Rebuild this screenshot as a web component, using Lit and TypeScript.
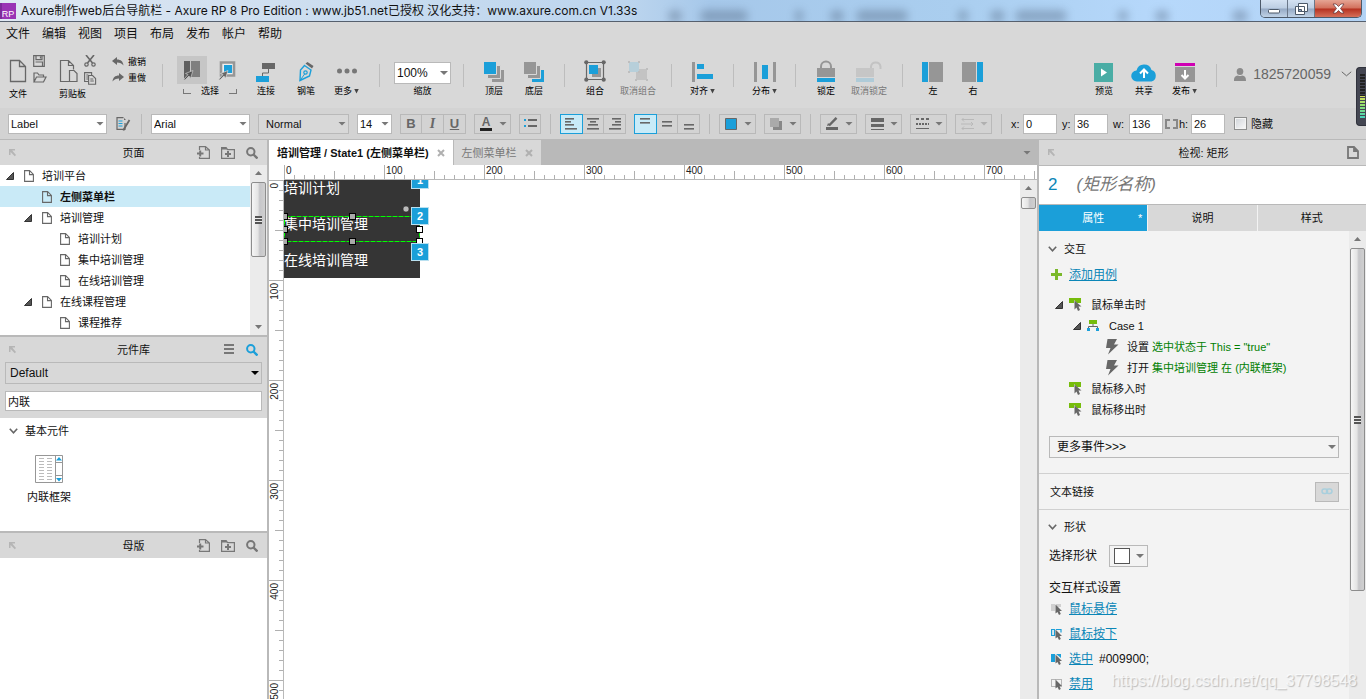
import { LitElement, html, svg, css, nothing } from "lit";
import { customElement, state } from "lit/decorators.js";
import { classMap } from "lit/directives/class-map.js";

const G = "#676767";
const M = "#969696";
const B = "#1b9fd9";

const icon = (w: number, h: number, body: unknown) =>
  html`<svg width=${w} height=${h} viewBox="0 0 ${w} ${h}" aria-hidden="true">${body}</svg>`;

const ic = {
  file: () => icon(18, 24, svg`<path d="M1.500 1.500h9l6 6v15h-15z M10.500 1.500v6h6" fill="none" stroke=${G} stroke-width="1.300"/>`),
  save: () => icon(12, 12, svg`<path d="M.7.7h10.600v10.600H.7z M3 .7v4h6v-4 M7.500 1.500v2 M2.500 7h7v4" fill="none" stroke=${G} stroke-width="1.200"/>`),
  open: () => icon(14, 11, svg`<path d="M1 10V1h3.500l1.500 2h4.500v2 M1 10l2.500-5h9.500l-2.500 5z" fill="none" stroke=${G} stroke-width="1.200"/>`),
  paste: () => icon(19, 24, svg`<path d="M10 22.500H1.500v-21h8l5 5v4 M9.500 1.500v5h5 M10.500 11.500h4.500l3 3v8h-7.500z" fill="none" stroke=${G} stroke-width="1.200"/>`),
  cut: () => icon(12, 12, svg`<path d="M2 0l6.500 8 M10 0L3.500 8" stroke=${G} stroke-width="1.600"/><g fill="none" stroke=${G} stroke-width="1.200"><circle cx="2.500" cy="9.500" r="1.700"/><circle cx="9.500" cy="9.500" r="1.700"/></g>`),
  copy: () => icon(13, 13, svg`<path d="M4 9.500H.6V.6h7V3 M2.300 3h2 M2.300 5h2 M2.300 7h2 M4.600 3.500h4l3 3v5.800h-7z M6.300 7h3 M6.300 9h3.500" fill="none" stroke=${G} stroke-width="1.100"/>`),
  undo: () => icon(12, 11, svg`<path d="M0 4l5-4v2.500c4 0 6 2 6.500 6C10 6.500 8 5.500 5 5.500V8z" fill=${G}/>`),
  redo: () => icon(12, 11, svg`<path d="M12 4L7 0v2.500C3 2.500 1 4.500.5 8.500 2 6.500 4 5.500 7 5.500V8z" fill=${G}/>`),
  selectIntersect: () => icon(18, 20, svg`<path d="M1 1h6v12l-5 5H1z" fill="#5f5f5f"/><path d="M8 1h9v16H8z" fill="#7f7f7f"/><path d="M.5 19.500l4.500-5-2.500-1 7.500-3-2.500 8-1.500-2.500-4 4z" fill="#555" stroke="#ccc" stroke-width=".7"/>`),
  selectContain: () => icon(18, 20, svg`<path d="M3 2.500h13v13H3z" fill="#eee" stroke=${M} stroke-width="2.600"/><path d="M6 5h8v8H6z" fill=${B}/><path d="M.5 19.500l4.500-5-2.500-1 7.500-3-2.500 8-1.500-2.500-4 4z" fill=${G} stroke="#ddd" stroke-width=".7"/>`),
  connect: () => icon(20, 20, svg`<path d="M6 1h13v6H6z" fill=${G}/><path d="M0 14h13v6H0z" fill=${B}/><path d="M12.500 7v4h-6v3" fill="none" stroke=${G}/>`),
  pen: () => icon(16, 20, svg`<path d="M7.500 1.500l2-1.500 6 4-1.500 2.500z" fill=${G}/><path d="M6.500 3.500l6.500 4.500-1.500 6-9.500 4.500L2.500 8z" fill="none" stroke=${B} stroke-width="1.400"/><path d="M2 18.500L7 11.500" stroke=${B}/><circle cx="7.500" cy="10.500" r="1.700" fill="#d8d8d8" stroke=${B} stroke-width="1.200"/>`),
  more: () => icon(20, 20, svg`<g fill="#777"><circle cx="2.500" cy="9" r="2.500"/><circle cx="10" cy="9" r="2.500"/><circle cx="17.500" cy="9" r="2.500"/></g>`),
  front: () => icon(20, 20, svg`<path d="M8 8h12v12H8z" fill=${M}/><path d="M3.500 3.500h13v13h-13z" fill=${M} stroke="#d8d8d8"/><path d="M-.5-.5h13v13h-13z" fill=${B} stroke="#d8d8d8"/>`),
  back: () => icon(20, 20, svg`<path d="M8 8h12v12H8z" fill=${B}/><path d="M3.500 3.500h13v13h-13z" fill=${M} stroke="#d8d8d8"/><path d="M-.5-.5h13v13h-13z" fill=${M} stroke="#d8d8d8"/>`),
  group: () => icon(22, 22, svg`<path d="M2.500 2.500h17v17h-17z" fill="none" stroke=${G} stroke-width="1.200"/><path d="M8 8h9v9H8z" fill=${M}/><path d="M5 5h9v9H5z" fill=${B}/><g fill=${G}><circle cx="2.300" cy="2.300" r="2.100"/><circle cx="19.700" cy="2.300" r="2.100"/><circle cx="2.300" cy="19.700" r="2.100"/><circle cx="19.700" cy="19.700" r="2.100"/></g>`),
  ungroup: () => icon(22, 22, svg`<path d="M9 9h11v11H9z" fill="#c3c3c3"/><path d="M2 2h10v10H2z" fill="#b7cfda"/><path d="M1 1h2v2H1z M11 1h2v2h-2z M1 11h2v2H1z M11 11h2v2h-2z M19 8h2v2h-2z M8 19h2v2H8z M19 19h2v2h-2z" fill="#bebebe"/>`),
  align: () => icon(22, 20, svg`<path d="M0 0h3v20H0z" fill=${M}/><path d="M5 2h7v5H5z M5 12h16v5H5z" fill=${B}/>`),
  distribute: () => icon(22, 20, svg`<path d="M0 0h3v20H0z M19 0h3v20h-3z" fill=${M}/><path d="M8 3h6v14H8z" fill=${B}/>`),
  lock: () => icon(18, 22, svg`<path d="M4 9V6.500a5 5 0 0 1 10 0V9" fill="none" stroke=${M} stroke-width="2"/><path d="M0 8h18v9H0z" fill=${M}/><path d="M0 18h18v4H0z" fill=${B}/>`),
  unlock: () => icon(26, 22, svg`<path d="M15 9V6.500a4.800 4.800 0 0 1 9.500 0V9" fill="none" stroke="#c3c3c3" stroke-width="2"/><path d="M0 8h18v9H0z" fill="#c6c6c6"/><path d="M0 18h18v4H0z" fill="#afcbd8"/>`),
  left: () => icon(22, 20, svg`<path d="M0 0h6v20H0z" fill=${B}/><path d="M7 0h14v20H7z" fill=${M}/>`),
  right: () => icon(22, 20, svg`<path d="M0 0h14v20H0z" fill=${M}/><path d="M15 0h6v20h-6z" fill=${B}/>`),
  preview: () => icon(20, 20, svg`<path d="M0 1h19v19H0z" fill="#4aada5"/><path d="M7 6.500l6 4-6 4z" fill="#fff"/>`),
  share: () => icon(26, 20, svg`<path d="M6 19.500a5.500 5.500 0 0 1-.5-11A7.800 7.800 0 0 1 20.500 8a6 6 0 0 1 0 11.500z" fill=${B}/><path d="M13 16V8 M9 11.500l4-4 4 4" fill="none" stroke="#fff" stroke-width="2"/>`),
  publish: () => icon(20, 20, svg`<path d="M0 1h20v3H0z" fill="#cf00b3"/><path d="M0 5h20v15H0z" fill=${M}/><path d="M10 8v8 M6.500 13l3.500 3.500 3.500-3.500" fill="none" stroke="#fff" stroke-width="2"/>`),
  user: () => icon(12, 13, svg`<ellipse cx="6" cy="3.500" rx="3.300" ry="3.500" fill="#8b8b8b"/><path d="M0 13c0-4 1-5 4-5.500q2 1 4 0c3 .5 4 1.500 4 5.500z" fill="#8b8b8b"/>`),
  chevron: (w = 9) => icon(w, 6, svg`<path d="M.8.8l${w / 2 - .8} 4 ${w / 2 - .8}-4" fill="none" stroke="#666" stroke-width=${w > 9 ? 1 : 1.6}/>`),
  styleEdit: () => icon(15, 14, svg`<path d="M7.500.6H1v11.800h8V6" fill="none" stroke=${G} stroke-width="1.200"/><path d="M2.500 4h4 M2.500 6.500h4 M2.500 9h4" stroke=${B}/><path d="M13.500 3L8 12l-.5 1.500" stroke=${G} stroke-width="1.800"/><path d="M8 1l2 2H8z" fill=${G}/>`),
  list: () => icon(13, 12, svg`<path d="M0 1h2v2H0z M0 7h2v2H0z" fill=${B}/><path d="M4 1h9v2H4z M4 7h9v2H4z" fill=${G}/>`),
  txt: (rows: number[][]) => icon(12, 12, svg`${rows.map(([x, y, w]) => svg`<rect x=${x} y=${y} width=${w} height="1.600" fill=${G}/>`)}`),
  fill: () => icon(12, 12, svg`<path d="M.5.5h11v11H.5z" fill=${B} stroke=${G}/>`),
  shadow: () => icon(12, 12, svg`<path d="M3 3h9v9H3z" fill="#888"/><path d="M0 0h9v9H0z" fill="#aaa"/>`),
  pencil: () => icon(13, 13, svg`<path d="M0 10h12v3H0z" fill=${G}/><path d="M3 8.500L10.500.8" stroke=${G} stroke-width="2.400"/><path d="M1 9l1-3 2 2z" fill=${G}/>`),
  weight: () => icon(13, 12, svg`<path d="M0 0h13v4H0z M0 6h13v3H0z M0 11h13v1H0z" fill=${G}/>`),
  dash: () => icon(13, 12, svg`<path d="M0 1h13" stroke=${G} stroke-width="2" stroke-dasharray="3 2"/><path d="M0 6h13" stroke=${G} stroke-width="2" stroke-dasharray="2 1"/><path d="M0 10.500h13" stroke=${G}/>`),
  arrows: () => icon(13, 12, svg`<path d="M1 1.500h12 M3-.5L1 1.500l2 2 M0 6h12 M10 4l2 2-2 2 M1 10.500h12 M3 8.500l-2 2 2 2" fill="none" stroke="#b9b9b9"/>`),
  ratio: () => icon(13, 10, svg`<path d="M5 1H1v8h4 M8 1h4v8H8" fill="none" stroke="#888" stroke-width="2"/>`),
  collapse: () => icon(7, 8, svg`<path d="M0 0h6v1.500H3.200L7 6l-1.200 1.200L1.500 3v3H0z" fill="#b5b5b5"/>`),
  doc: () => icon(10, 12, svg`<path d="M.6.6h5l3.800 3.800v7H.6z M5.500.6v4h4" fill="none" stroke=${G} stroke-width="1.100"/>`),
  docBold: () => icon(12, 13, svg`<path d="M1 1h6l4 4v7H1z M7 1v4h4" fill="none" stroke="#777" stroke-width="1.800"/>`),
  addPage: () => icon(13, 13, svg`<path d="M2.500 4V.6h6L12.400 4v8.400H2.500V11 M8.500.6V4h4" fill="none" stroke="#777" stroke-width="1.200"/><path d="M0 7.500h6.500 M3.200 4.500v6" stroke="#777" stroke-width="2"/>`),
  addFolder: () => icon(14, 12, svg`<path d="M.6 11.400V.6h4.500l1.500 2h6.800v8.800z" fill="none" stroke="#777" stroke-width="1.200"/><path d="M.6.6h4.500l1 2H.6z" fill="#777"/><path d="M4 7h6 M7 4v6" stroke="#777" stroke-width="2"/>`),
  search: (c: string) => icon(12, 12, svg`<circle cx="4.800" cy="4.800" r="3.700" fill="none" stroke=${c} stroke-width="2"/><path d="M7.500 7.500l4 4" stroke=${c} stroke-width="2.400"/>`),
  menu: () => icon(12, 11, svg`<path d="M1 0h10v2H1z M1 4h10v2H1z M1 8h10v2H1z" fill="#777"/>`),
  toggle: () => icon(8, 8, svg`<path d="M7.500.5v7h-7z" fill="#555" stroke="#333"/>`),
  frame: () => icon(28, 28, svg`<path d="M.5.5h27v27H.5z M20.500.5v27 M20.500 7.500h7 M20.500 20.500h7" fill="#fff" stroke=${M}/><path d="M4 3.500h5 M12 3.500h5 M4 6.500h5 M12 6.500h5 M4 9.500h5 M12 9.500h5 M4 12.500h5 M12 12.500h5 M4 15.500h5 M12 15.500h5 M4 18.500h5 M12 18.500h5 M4 21.500h5 M12 21.500h5 M4 24.500h5 M12 24.500h5" stroke="#bbb"/><path d="M21 5.500l3-3.500 3 3.500z M21 23l3 3.500 3-3.500z" fill=${B}/>`),
  event: () => icon(16, 14, svg`<path d="M0 0h12v5H8L5 2v3H0z" fill="#76bc0c"/><path d="M5.500 2.500v9l2-2 1.500 3.500 2-1-1.500-3.500h3z" fill=${G}/>`),
  caseIcon: () => icon(16, 14, svg`<path d="M2 1h8v4H2z" fill="#76bc0c"/><path d="M6 5v2.500 M1.500 9V7.500h9V9" fill="none" stroke=${G}/><path d="M0 9h3v3H0z M9 9h3v3H9z" fill=${B}/>`),
  bolt: () => icon(16, 16, svg`<path d="M2.500 0H12L9 5.500h4.500L3 15.500l2.500-6.500H1z" fill=${G}/>`),
  plus: () => icon(12, 12, svg`<path d="M4 0h3v4h4v3H7v4H4V7H0V4h4z" fill="#7ab82a"/>`),
  link: () => icon(12, 7, svg`<g fill="none" stroke="#a9cfdd" stroke-width="1.500"><rect x="1" y="1" width="5.500" height="4.500" rx="2.200"/><rect x="5.500" y="1" width="5.500" height="4.500" rx="2.200"/></g>`),
  state: (kind: string) => icon(12, 12, svg`
    ${kind === "hover" ? svg`<path d="M0 1h4v7H0z M5 1h5v3H5z" fill="#d0d0d0"/>` : nothing}
    ${kind === "down" ? svg`<path d="M3.500 1.500H.6v6h2.900z M5 1.500h5v3" fill="none" stroke=${B} stroke-width="1.200"/>` : nothing}
    ${kind === "sel" ? svg`<path d="M0 1h4v8H0z M5 1h5v4z" fill=${B}/>` : nothing}
    ${kind === "off" ? svg`<path d="M.5 1.500h10v7H.5z" fill="none" stroke="#777" stroke-dasharray="1 1"/>` : nothing}
    <path d="M4.500 1.500v9l2-1.500 1.500 3 1.800-1-1.300-3H11z" fill=${G}/>`),
};

interface PageNode { text: string; depth: number; open?: boolean; selected?: boolean }

const PAGES: PageNode[] = [
  { text: "培训平台", depth: 0, open: true },
  { text: "左侧菜单栏", depth: 1, selected: true },
  { text: "培训管理", depth: 1, open: true },
  { text: "培训计划", depth: 2 },
  { text: "集中培训管理", depth: 2 },
  { text: "在线培训管理", depth: 2 },
  { text: "在线课程管理", depth: 1, open: true },
  { text: "课程推荐", depth: 2 },
];

@customElement("app-root")
export class AppRoot extends LitElement {
  static styles = css`
    :host { display: flex; flex-direction: column; height: 100vh; overflow: hidden; position: relative; background: #d8d8d8; color: #111;
      font: 11px/16px "Liberation Sans", "Noto Sans CJK SC", sans-serif; }
    * { box-sizing: border-box; }
    svg { display: block; flex: none; }
    button { font: inherit; color: inherit; border: 0; padding: 0; margin: 0; background: none; }
    input, select { font: inherit; color: #111; margin: 0; border: 1px solid #b9b9b9; border-radius: 0; background: #fff; min-width: 0; }
    input { padding: 0 2px; }
    select { appearance: none; padding: 0 14px 0 2px; width: 100%; height: 100%; }
    a { color: #0b86b7; text-decoration: underline; }
    .caret { width: 8px; height: 4px; background: #777; clip-path: polygon(0 0, 100% 0, 50% 100%); flex: none; }
    .sel { display: grid; flex: none; height: 20px; align-items: center; }
    .sel > * { grid-area: 1 / 1; }
    .sel > .caret { justify-self: end; margin-right: 3px; pointer-events: none; }

    .titlebar { height: 22px; flex: none; display: flex; align-items: center; position: relative; border-bottom: 1px solid #56606e; overflow: hidden;
      font: 12px/20px "Inter", "Noto Sans CJK SC", sans-serif;
      background: linear-gradient(90deg, #dfe8f3 0, #cfdff0 20%, #bcd5ee 46%, #a6c8ea 52%, #aaceef 70%, #b6d8fb 85%, #b3d3f5 100%); }
    .blobs { position: absolute; inset: 0; }
    .blob { position: absolute; top: 10px; height: 12px; background: #42536b; filter: blur(4px); opacity: .35; border-radius: 6px; }
    .logo { width: 16px; height: 16px; display: flex; align-items: flex-end; justify-content: center; background: linear-gradient(90deg, #7d2a9a 2px, #9a34b5 2px); color: #fff; font: 9px/10px "Liberation Sans", sans-serif; position: relative; }
    .title { margin: 0 0 0 5px; font-size: 12px; font-weight: 400; position: relative; white-space: nowrap; }
    .winbtns { position: relative; margin-left: auto; margin-right: 4px; align-self: flex-start; display: flex; height: 18px; border: 1px solid #4c5969; border-top: 0; border-radius: 0 0 5px 5px; overflow: hidden; }
    .winbtns button { width: 27px; display: grid; place-items: center; border-right: 1px solid #6a7789; background: linear-gradient(#d4e2f2 0, #bccde2 48%, #95a9c4 52%, #c0d2e6 100%); }
    .winbtns .close { width: 46px; border: 0; background: linear-gradient(#e5a594 0, #d2705c 48%, #b53120 52%, #d6705a 100%); }

    .menubar { height: 24px; flex: none; display: flex; gap: 12px; padding: 0 6px; align-items: center; font-size: 12px; }
    .toolbar { height: 62px; flex: none; display: flex; font-size: 9px; line-height: 12px; padding: 8px 14px 0 9px; color: #000; }
    .duo { display: grid; grid-template-columns: auto auto; column-gap: 6px; align-content: start; }
    .duo .big { grid-row: 1 / 3; padding-top: 5px; height: 33px; display: flex; align-items: flex-start; }
    .duo .small { height: 17px; padding-top: 1px; display: flex; align-items: flex-start; }
    .duo .lbl { grid-column: 1 / 3; text-align: left; }
    .clip { margin-left: 12px; }
    .undo { margin-left: 15px; display: flex; flex-direction: column; }
    .undo button { display: flex; align-items: center; gap: 4px; height: 16px; }
    .sep { width: 1px; height: 23px; margin: 10px 10px 0; background: #bdbdbd; flex: none; }
    .sep.wide { margin: 10px 12px 0; }
    .sep.first { margin: 10px 14px 0 16px; }
    .tool { width: 40px; display: flex; flex-direction: column; align-items: center; flex: none; }
    .tool .pic { height: 31px; padding-bottom: 3px; display: flex; align-items: flex-end; }
    .tool .cap { display: flex; align-items: center; gap: 2px; white-space: nowrap; }
    .tool.drop { width: 41px; }
    .tool.long { width: 46px; }
    .tool.off { color: #777; }
    .mini { width: 5px; height: 5px; background: #444; clip-path: polygon(0 0, 100% 0, 50% 100%); }
    .picks { display: flex; flex-direction: column; margin-right: 7px; width: 62px; }
    .picks .pair { display: flex; gap: 10px; padding-top: 2px; height: 31px; }
    .picks .pair button { height: 28px; display: grid; place-items: center; width: 20px; }
    .picks .pair .on { width: 30px; background: #c6c6c6; }
    .picks .cap { display: flex; justify-content: space-between; align-items: center; padding: 0 2px 0 6px; }
    .corner { width: 8px; height: 5px; border: solid #777; border-width: 0 0 1px 1px; }
    .corner.r { border-width: 0 1px 1px 0; }
    .zoom { width: 61px; padding: 8px 2px 0; display: flex; flex-direction: column; align-items: center; }
    .zoom .sel { height: 22px; width: 57px; font-size: 12px; margin-bottom: 1px; }
    .right { margin-left: auto; display: flex; }
    .user { display: flex; align-items: center; gap: 7px; height: 40px; font-size: 14px; color: #666; }
    .user svg:last-child { margin-left: 3px; }
    .sep.account { margin: 10px 17px 0 11px; }

    .format { height: 32px; flex: none; display: flex; align-items: center; gap: 8px; padding: 0 8px; background: #d3d3d3; border-bottom: 1px solid #b9b9b9; }
    .format .bar { width: 1px; height: 20px; margin: 0 1px; background: #b9b9b9; flex: none; }
    .w99 { width: 99px; } .w91 { width: 91px; } .w35 { width: 35px; }
    .w91 select { background: #d8d8d8; padding-left: 7px; }
    .sty { width: 17px; display: grid; place-items: center; }
    .seg { display: flex; border: 1px solid #b9b9b9; height: 20px; flex: none; }
    .seg button { width: 22px; display: grid; place-items: center; border-right: 1px solid #b9b9b9; color: #676767; font-size: 13px; font-weight: 700; line-height: 14px; }
    .seg button:first-child, .seg button:last-child { width: 21px; }
    .seg button:last-child { border-right: 0; }
    .seg .on { background: #c8ebf8; outline: 1px solid #1b9fd9; border-color: #c8ebf8; }
    .seg .i { font-style: italic; font-family: "Liberation Serif", serif; font-size: 14px; }
    .seg .u { text-decoration: underline; }
    .one { width: 22px; height: 20px; border: 1px solid #b9b9b9; display: grid; place-items: center; flex: none; }
    .dd { width: 37px; height: 20px; border: 1px solid #b9b9b9; display: flex; align-items: center; justify-content: space-between; padding: 0 3px 0 5px; flex: none; }
    .dd.off .caret { background: #b0b0b0; }
    .glyph { width: 12px; font-size: 12px; line-height: 12px; font-weight: 700; color: #676767; border-bottom: 3px solid #222; text-align: center; }
    .geo { display: flex; align-items: center; color: #111; }
    .geo label { display: flex; align-items: center; margin-right: 5px; }
    .geo label span { width: 12px; }
    .geo label .wide { width: 16px; }
    .geo input { width: 34px; height: 20px; }
    .geo .nogap { margin-right: 2px; }
    .geo .tight { margin: 0; padding-left: 1px; }
    .hide { display: flex; align-items: center; gap: 4px; padding-left: 1px; }
    .hide input { appearance: none; width: 13px; height: 13px; border: 1px solid #8e8f8f; background: linear-gradient(135deg, #cfd3d8, #fbfbfb); outline: 1px solid #f4f4f4; outline-offset: -2px; }

    .main { flex: 1; min-height: 0; display: grid; grid-template-columns: 267px minmax(0, 1fr) 327px; gap: 2px; background: #b9b9b9; }
    .left { display: flex; flex-direction: column; min-height: 0; gap: 2px; }
    .panel { background: #fff; display: flex; flex-direction: column; min-height: 0; overflow: hidden; }
    .panel.grow { flex: 1; }
    .head { height: 25px; flex: none; display: grid; grid-template-columns: 1fr auto 1fr; align-items: center; padding: 0 9px; background: #d8d8d8; }
    .head h2 { margin: 0; font-size: 11px; font-weight: 400; }
    .head .acts { display: flex; justify-content: flex-end; align-items: center; gap: 11px; }
    .scrollable { display: flex; min-height: 0; flex: 1; }
    .tree { flex: 1; margin: 0; padding: 0 0 2px; list-style: none; min-width: 0; }
    .node { height: 21px; display: flex; align-items: center; gap: 8px; padding-left: 6px; }
    .node .tg { width: 10px; }
    .node.d1 { padding-left: 24px; }
    .node.d2 { padding-left: 42px; }
    .node.selected { background: #c9eaf7; font-weight: 700; }
    .sb { width: 17px; flex: none; background: #ebebeb; display: flex; flex-direction: column; align-items: center; padding: 6px 1px; }
    .sb .up { width: 7px; height: 4px; background: #777; clip-path: polygon(50% 0, 100% 100%, 0 100%); margin-bottom: 7px; flex: none; }
    .sb .down { width: 7px; height: 4px; background: #777; clip-path: polygon(0 0, 100% 0, 50% 100%); margin-top: auto; }
    .thumb { width: 15px; border: 1px solid #8d8d8d; border-radius: 2px; background: linear-gradient(90deg, #f6f6f6, #e4e4e4 45%, #c6c6c9 60%, #d0d0d0); display: grid; place-items: center; flex: none; }
    .grip { width: 7px; height: 8px; background: repeating-linear-gradient(#555 0 2px, #eee 2px 3px); }
    .t75 { height: 75px; } .t12 { height: 12px; } .t343 { height: 343px; }

    .lib { background: #d8d8d8; padding: 0 5px 7px; display: flex; flex-direction: column; gap: 7px; }
    .lib .sel { height: 22px; font-size: 12px; }
    .lib select { background: #d8d8d8; padding-left: 4px; }
    .lib .caret { background: #000; }
    .lib input { height: 20px; width: 100%; }
    .group { display: flex; align-items: center; gap: 7px; height: 26px; padding-left: 9px; margin: 0; font-size: 11px; font-weight: 400; }
    .widgets { display: flex; height: 87px; padding: 11px 16px 0; }
    .widget { width: 66px; display: flex; flex-direction: column; align-items: center; gap: 6px; align-self: flex-start; }

    .center { display: flex; flex-direction: column; min-width: 0; background: #fff; }
    .tabs { height: 25px; flex: none; display: flex; background: #b9b9b9; align-items: center; }
    .tab { height: 25px; padding: 0 8px; display: flex; align-items: center; gap: 8px; background: #d8d8d8; color: #777; border-right: 1px solid #b9b9b9; white-space: nowrap; }
    .tab.on { background: #fff; color: #111; font-weight: 700; }
    .tabs .caret { margin-left: auto; margin-right: 6px; }
    .board { flex: 1; min-height: 0; display: grid; grid-template-columns: 15px minmax(0, 1fr); grid-template-rows: 15px minmax(0, 1fr); }
    .rh { grid-column: 2; display: block; border-bottom: 1px solid #b9b9b9; overflow: hidden; }
    .rv { grid-column: 1; grid-row: 2; border-right: 1px solid #b9b9b9; overflow: hidden; }
    .ruler { width: 100%; height: 100%; font-size: 10px; fill: #222; }
    .view { grid-column: 2; grid-row: 2; display: flex; min-height: 0; }
    .canvas { flex: 1; position: relative; overflow: hidden; background: #fff; }
    .shape { position: absolute; left: 0; top: 0; width: 136px; height: 98px; background: #353535; }
    .item { position: absolute; left: 0; color: #fff; font-size: 14px; line-height: 16px; white-space: nowrap; }
    .i1 { top: 0; } .i2 { top: 36px; } .i3 { top: 72px; }
    .pickbox { position: absolute; left: 0; top: 0; }
    .badge { position: absolute; left: 127px; width: 18px; height: 18px; background: #1b9fd9; border: 1px solid #b9e0f0; color: #fff; text-align: center; font-weight: 700; }
    .b1 { top: -9px; } .b2 { top: 27px; } .b3 { top: 63px; }

    .inspect { display: flex; flex-direction: column; min-height: 0; background: #f3f3f3; }
    .inspect .head { border-bottom: 1px solid #b9b9b9; height: 26px; padding: 0 7px 0 9px; }
    .name { height: 39px; flex: none; display: flex; align-items: center; gap: 19px; padding: 0 9px; background: #fff; border-bottom: 1px solid #b9b9b9; font-size: 17px; color: #777; }
    .name b { font-weight: 400; color: #0b86b7; }
    .ptabs { height: 26px; flex: none; display: grid; grid-template-columns: repeat(3, 1fr); gap: 1px; background: #f3f3f3; }
    .ptabs button { background: #d8d8d8; display: grid; grid-template-columns: 1fr auto 1fr; align-items: center; padding: 0 5px; }
    .ptabs .on { background: #1b9fd9; color: #fff; }
    .ptabs button span { grid-column: 2; }
    .ptabs button sup { grid-column: 3; justify-self: end; font-size: 11px; line-height: 12px; }
    .props { flex: 1; min-width: 0; padding-top: 5px; overflow: hidden; }
    .add { display: flex; align-items: center; gap: 6px; height: 26px; padding-left: 12px; font-size: 12px; }
    .events { margin: 0; padding: 6px 0 16px; list-style: none; }
    .ev { height: 21px; display: flex; align-items: center; gap: 6px; padding-left: 30px; white-space: nowrap; }
    .ev.open { padding-left: 16px; }
    .ev.case { padding-left: 34px; }
    .ev.act { padding-left: 66px; }
    .ev i { font-style: normal; color: #008000; }
    .moreev { margin: 0 10px 15px; height: 22px; font-size: 12px; }
    .moreev select { background: transparent; padding-left: 7px; }
    .linkrow { display: flex; align-items: center; justify-content: space-between; height: 37px; padding: 0 10px 0 11px; border: solid #d0d0d0; border-width: 1px 0; }
    .linkrow button { width: 24px; height: 20px; background: #d8d8d8; border: 1px solid #b9b9b9; display: grid; place-items: center; }
    .shapegroup { height: 34px; }
    .row { display: flex; align-items: center; gap: 12px; padding-left: 10px; font-size: 12px; height: 24px; }
    .shapepick { width: 39px; height: 22px; border: 1px solid #b9b9b9; display: flex; align-items: center; justify-content: space-between; padding: 0 3px 0 4px; }
    .swatch { width: 16px; height: 16px; border: 1px solid #555; background: #fff; }
    .sub { margin: 0; padding: 12px 0 0 10px; font-size: 12px; font-weight: 400; line-height: 16px; }
    .st { display: flex; align-items: center; gap: 6px; height: 25px; padding-left: 12px; font-size: 12px; }
    .mark { position: absolute; right: 9px; bottom: 8px; font-size: 16px; line-height: 20px; color: rgba(255, 255, 255, .7); text-shadow: 1px 1px 1px rgba(120, 120, 120, .45); pointer-events: none; }
    .meter { position: absolute; right: 0; top: 67px; width: 10px; height: 59px; border-radius: 4px 0 0 4px; background: #444652; border: 1px solid #30323c; border-right: 0; padding: 6px 1px 6px 3px; display: flex; }
    .meter i { flex: 1; background: repeating-linear-gradient(transparent 0 2px, #444652 2px 3px), linear-gradient(#222 0 48%, #d8e05a 49%, #8fe070 70%, #3fd0c0 100%); }
  `;

  /* Horizontal ruler labels that fit into the space between the side panels. */
  @state() private columns = this.countColumns();

  private countColumns() {
    return Math.max(1, Math.floor((window.innerWidth - 267 - 327 - 19 - 20) / 100) + 1);
  }

  private onResize = () => { this.columns = this.countColumns(); };

  connectedCallback() {
    super.connectedCallback();
    window.addEventListener("resize", this.onResize);
  }

  disconnectedCallback() {
    window.removeEventListener("resize", this.onResize);
    super.disconnectedCallback();
  }

  private tool(pic: unknown, label: string, kind = "") {
    return html`<button class="tool ${kind}" ?disabled=${kind.includes("off")}>
      <span class="pic">${pic}</span>
      <span class="cap">${label}${kind.includes("drop") ? html`<span class="mini"></span>` : nothing}</span>
    </button>`;
  }

  private select(label: string, value: string, cls = "") {
    return html`<div class="sel ${cls}"><select aria-label=${label}><option>${value}</option></select><span class="caret"></span></div>`;
  }

  private drop(label: string, pic: unknown, off = false) {
    return html`<button class=${classMap({ dd: true, off })} aria-label=${label}>${pic}<span class="caret"></span></button>`;
  }

  private head(title: string, acts: unknown) {
    return html`<div class="head">${ic.collapse()}<h2>${title}</h2><div class="acts">${acts}</div></div>`;
  }

  private scrollbar(thumb: string, grip: boolean, down: boolean) {
    return html`<div class="sb" aria-hidden="true"><span class="up"></span>
      <span class="thumb ${thumb}">${grip ? html`<span class="grip"></span>` : nothing}</span>
      ${down ? html`<span class="down"></span>` : nothing}</div>`;
  }

  private titlebar() {
    const blobs = [[668, 14], [700, 48], [795, 8], [830, 14], [856, 52], [958, 10], [990, 15], [1015, 52], [1118, 10], [1155, 14], [1232, 16]];
    return html`<header class="titlebar">
      <div class="blobs" aria-hidden="true">${blobs.map(([x, w]) => html`<span class="blob" style="left:${x}px;width:${w}px"></span>`)}</div>
      <span class="logo">RP</span>
      <h1 class="title">Axure制作web后台导航栏 - Axure RP 8 Pro Edition : www.jb51.net已授权 汉化支持：www.axure.com.cn V1.33s</h1>
      <div class="winbtns">
        <button aria-label="最小化">${icon(13, 12, svg`<rect x=".5" y="6.500" width="11" height="3.500" rx="1" fill="#fff" stroke="#4c5969"/>`)}</button>
        <button aria-label="还原">${icon(13, 12, svg`<path d="M3.500.5h9v8h-9z M.5 3.500h9v8h-9z" fill="#fff" stroke="#4c5969"/><path d="M3.500 6.500h3v2h-3z" fill="#8fa3bf" stroke="#4c5969"/>`)}</button>
        <button class="close" aria-label="关闭">${icon(13, 11, svg`<path d="M1 1h3l2.500 2.500L9 1h3L8.500 5.500 12 10H9L6.500 7.500 4 10H1l3.500-4.500z" fill="#fff" stroke="#5a3038" stroke-width=".7"/>`)}</button>
      </div>
    </header>`;
  }

  private toolbar() {
    return html`<div class="toolbar">
      <div class="duo">
        <button class="big" aria-label="新建">${ic.file()}</button>
        <button class="small" aria-label="保存">${ic.save()}</button>
        <button class="small" aria-label="打开">${ic.open()}</button>
        <span class="lbl">文件</span>
      </div>
      <div class="duo clip">
        <button class="big" aria-label="粘贴">${ic.paste()}</button>
        <button class="small" aria-label="剪切">${ic.cut()}</button>
        <button class="small" aria-label="复制">${ic.copy()}</button>
        <span class="lbl">剪贴板</span>
      </div>
      <div class="undo"><button>${ic.undo()}撤销</button><button>${ic.redo()}重做</button></div>
      <span class="sep first"></span>
      <div class="picks">
        <div class="pair"><button class="on" aria-label="相交选中">${ic.selectIntersect()}</button><button aria-label="包含选中">${ic.selectContain()}</button></div>
        <div class="cap"><span class="corner"></span>选择<span class="corner r"></span></div>
      </div>
      ${this.tool(ic.connect(), "连接")}${this.tool(ic.pen(), "钢笔")}${this.tool(ic.more(), "更多", "drop")}
      <span class="sep wide"></span>
      <div class="zoom">${this.select("缩放", "100%")}<span>缩放</span></div>
      <span class="sep"></span>
      ${this.tool(ic.front(), "顶层")}${this.tool(ic.back(), "底层")}
      <span class="sep"></span>
      ${this.tool(ic.group(), "组合")}${this.tool(ic.ungroup(), "取消组合", "long off")}
      <span class="sep"></span>
      ${this.tool(ic.align(), "对齐", "drop")}
      <span class="sep"></span>
      ${this.tool(ic.distribute(), "分布", "drop")}
      <span class="sep"></span>
      ${this.tool(ic.lock(), "锁定")}${this.tool(ic.unlock(), "取消锁定", "long off")}
      <span class="sep"></span>
      ${this.tool(ic.left(), "左")}${this.tool(ic.right(), "右")}
      <div class="right">
        ${this.tool(ic.preview(), "预览")}${this.tool(ic.share(), "共享")}${this.tool(ic.publish(), "发布", "drop")}
        <span class="sep account"></span>
        <button class="user">${ic.user()}<span>1825720059</span>${ic.chevron(11)}</button>
      </div>
    </div>`;
  }

  private format() {
    return html`<div class="format">
      ${this.select("样式", "Label", "w99")}
      <button class="sty" aria-label="管理样式">${ic.styleEdit()}</button>
      <span class="bar"></span>
      ${this.select("字体", "Arial", "w99")}${this.select("字形", "Normal", "w91")}${this.select("字号", "14", "w35")}
      <div class="seg"><button>B</button><button class="i">I</button><button class="u">U</button></div>
      ${this.drop("文字颜色", html`<span class="glyph">A</span>`)}
      <button class="one" aria-label="项目符号">${ic.list()}</button>
      <span class="bar"></span>
      <div class="seg">
        <button class="on" aria-label="左对齐">${ic.txt([[0, 0, 9], [0, 3, 6], [0, 6, 9], [0, 10, 12]])}</button>
        <button aria-label="居中">${ic.txt([[0, 0, 12], [3, 3, 6], [1, 6, 10], [0, 10, 12]])}</button>
        <button aria-label="右对齐">${ic.txt([[3, 0, 9], [6, 3, 6], [3, 6, 9], [0, 10, 12]])}</button>
      </div>
      <div class="seg">
        <button class="on" aria-label="顶部">${ic.txt([[1, 0, 10], [1, 4, 10]])}</button>
        <button aria-label="中部">${ic.txt([[1, 3, 10], [1, 7, 10]])}</button>
        <button aria-label="底部">${ic.txt([[1, 6, 10], [1, 10, 10]])}</button>
      </div>
      <span class="bar"></span>
      ${this.drop("填充", ic.fill())}${this.drop("阴影", ic.shadow())}
      <span class="bar"></span>
      ${this.drop("线段颜色", ic.pencil())}${this.drop("线宽", ic.weight())}${this.drop("线型", ic.dash())}${this.drop("箭头", ic.arrows(), true)}
      <span class="bar"></span>
      <div class="geo">
        <label><span>x:</span><input .value=${"0"}></label>
        <label><span>y:</span><input .value=${"36"}></label>
        <label class="nogap"><span class="wide">w:</span><input .value=${"136"}></label>
        ${ic.ratio()}
        <label class="tight"><span>h:</span><input .value=${"26"}></label>
      </div>
      <label class="hide"><input type="checkbox">隐藏</label>
    </div>`;
  }

  private left() {
    const pageActs = html`${ic.addPage()}${ic.addFolder()}${ic.search("#777")}`;
    return html`<div class="left">
      <section class="panel">
        ${this.head("页面", pageActs)}
        <div class="scrollable">
          <ul class="tree">${PAGES.map(p => html`<li class="node d${p.depth} ${p.selected ? "selected" : ""}">
            <span class="tg">${p.open ? ic.toggle() : nothing}</span>${ic.doc()}<span>${p.text}</span></li>`)}</ul>
          ${this.scrollbar("t75", true, true)}
        </div>
      </section>
      <section class="panel">
        ${this.head("元件库", html`${ic.menu()}${ic.search(B)}`)}
        <div class="lib">${this.select("元件库", "Default")}<input aria-label="搜索元件" .value=${"内联"}></div>
        <h3 class="group">${ic.chevron()}基本元件</h3>
        <div class="widgets"><div class="widget">${ic.frame()}<span>内联框架</span></div></div>
      </section>
      <section class="panel grow">${this.head("母版", pageActs)}</section>
    </div>`;
  }

  private center() {
    const close = () => icon(8, 8, svg`<path d="M1 1l6 6 M7 1L1 7" stroke="#b0b0b0" stroke-width="2"/>`);
    const marks = (n: number) => Array.from({ length: n }, (_, i) => i * 100);
    return html`<div class="center">
      <div class="tabs">
        <button class="tab on">培训管理 / State1 (左侧菜单栏)${close()}</button>
        <button class="tab">左侧菜单栏${close()}</button>
        <span class="caret"></span>
      </div>
      <div class="board">
        <div class="rh"><svg class="ruler" aria-hidden="true">
          <defs><pattern id="h" width="100" height="14" patternUnits="userSpaceOnUse">
            <path d="M.5 0v14 M50.500 6v8 M10.500 10v4 M20.500 10v4 M30.500 10v4 M40.500 10v4 M60.500 10v4 M70.500 10v4 M80.500 10v4 M90.500 10v4" stroke="#b0b0b0"/></pattern></defs>
          <rect width="100%" height="14" fill="url(#h)"/>
          ${marks(this.columns).map(m => svg`<text x=${m + 2} y="9">${m}</text>`)}
        </svg></div>
        <div class="rv"><svg class="ruler" aria-hidden="true">
          <defs><pattern id="v" width="14" height="100" patternUnits="userSpaceOnUse">
            <path d="M0 .5h14 M6 50.500h8 M10 10.500h4 M10 20.500h4 M10 30.500h4 M10 40.500h4 M10 60.500h4 M10 70.500h4 M10 80.500h4 M10 90.500h4" stroke="#b0b0b0"/></pattern></defs>
          <rect width="14" height="100%" fill="url(#v)"/>
          ${marks(6).map(m => svg`<text transform="translate(9 ${m + 3}) rotate(-90)" text-anchor="end">${m}</text>`)}
        </svg></div>
        <div class="view">
          <div class="canvas">
            <div class="shape"></div>
            <span class="item i1">培训计划</span><span class="item i2">集中培训管理</span><span class="item i3">在线培训管理</span>
            <svg class="pickbox" width="150" height="80" aria-hidden="true">
              <rect x=".5" y="36.500" width="135" height="25" fill="none" stroke="#0f0" stroke-dasharray="5 1"/>
              <circle cx="122" cy="29" r="3" fill="#bbb" stroke="#222" stroke-width=".5"/>
              ${[[0, 36], [68, 36], [0, 49], [135, 49], [0, 61], [68, 61], [135, 61]].map(([x, y]) =>
                svg`<rect x=${x - 2.5} y=${y - 2.5} width="6" height="6" fill=${x === 135 ? "#fff" : "#aaa"} stroke="#000"/>`)}
            </svg>
            <span class="badge b1">1</span><span class="badge b2">2</span><span class="badge b3">3</span>
          </div>
          ${this.scrollbar("t12", false, false)}
        </div>
      </div>
    </div>`;
  }

  private inspector() {
    const states: [string, string, string][] = [["hover", "鼠标悬停", ""], ["down", "鼠标按下", ""], ["sel", "选中", "#009900;"], ["off", "禁用", ""]];
    return html`<aside class="inspect">
      ${this.head("检视: 矩形", ic.docBold())}
      <div class="name"><b>2</b><em>(矩形名称)</em></div>
      <div class="ptabs"><button class="on"><span>属性</span><sup>*</sup></button><button><span>说明</span></button><button><span>样式</span></button></div>
      <div class="scrollable">
        <div class="props">
          <h3 class="group">${ic.chevron()}交互</h3>
          <div class="add">${ic.plus()}<a href="#">添加用例</a></div>
          <ul class="events">
            <li class="ev open">${ic.toggle()}${ic.event()}<span>鼠标单击时</span></li>
            <li class="ev case">${ic.toggle()}${ic.caseIcon()}<span>Case 1</span></li>
            <li class="ev act">${ic.bolt()}<span>设置 <i>选中状态于 This = "true"</i></span></li>
            <li class="ev act">${ic.bolt()}<span>打开 <i>集中培训管理 在 (内联框架)</i></span></li>
            <li class="ev">${ic.event()}<span>鼠标移入时</span></li>
            <li class="ev">${ic.event()}<span>鼠标移出时</span></li>
          </ul>
          ${this.select("更多事件", "更多事件>>>", "moreev")}
          <div class="linkrow"><span>文本链接</span><button disabled aria-label="链接">${ic.link()}</button></div>
          <h3 class="group shapegroup">${ic.chevron()}形状</h3>
          <div class="row"><span>选择形状</span><button class="shapepick" aria-label="选择形状"><span class="swatch"></span><span class="caret"></span></button></div>
          <h4 class="sub">交互样式设置</h4>
          ${states.map(([k, t, v]) => html`<div class="st">${ic.state(k)}<a href="#">${t}</a>${v ? html`<span>${v}</span>` : nothing}</div>`)}
        </div>
        ${this.scrollbar("t343", true, false)}
      </div>
    </aside>`;
  }

  render() {
    return html`
      ${this.titlebar()}
      <nav class="menubar">${["文件", "编辑", "视图", "项目", "布局", "发布", "帐户", "帮助"].map(m => html`<button>${m}</button>`)}</nav>
      ${this.toolbar()}${this.format()}
      <main class="main">${this.left()}${this.center()}${this.inspector()}</main>
      <div class="meter" aria-hidden="true"><i></i></div>
      <div class="mark">https://blog.csdn.net/qq_37798548</div>
    `;
  }
}
